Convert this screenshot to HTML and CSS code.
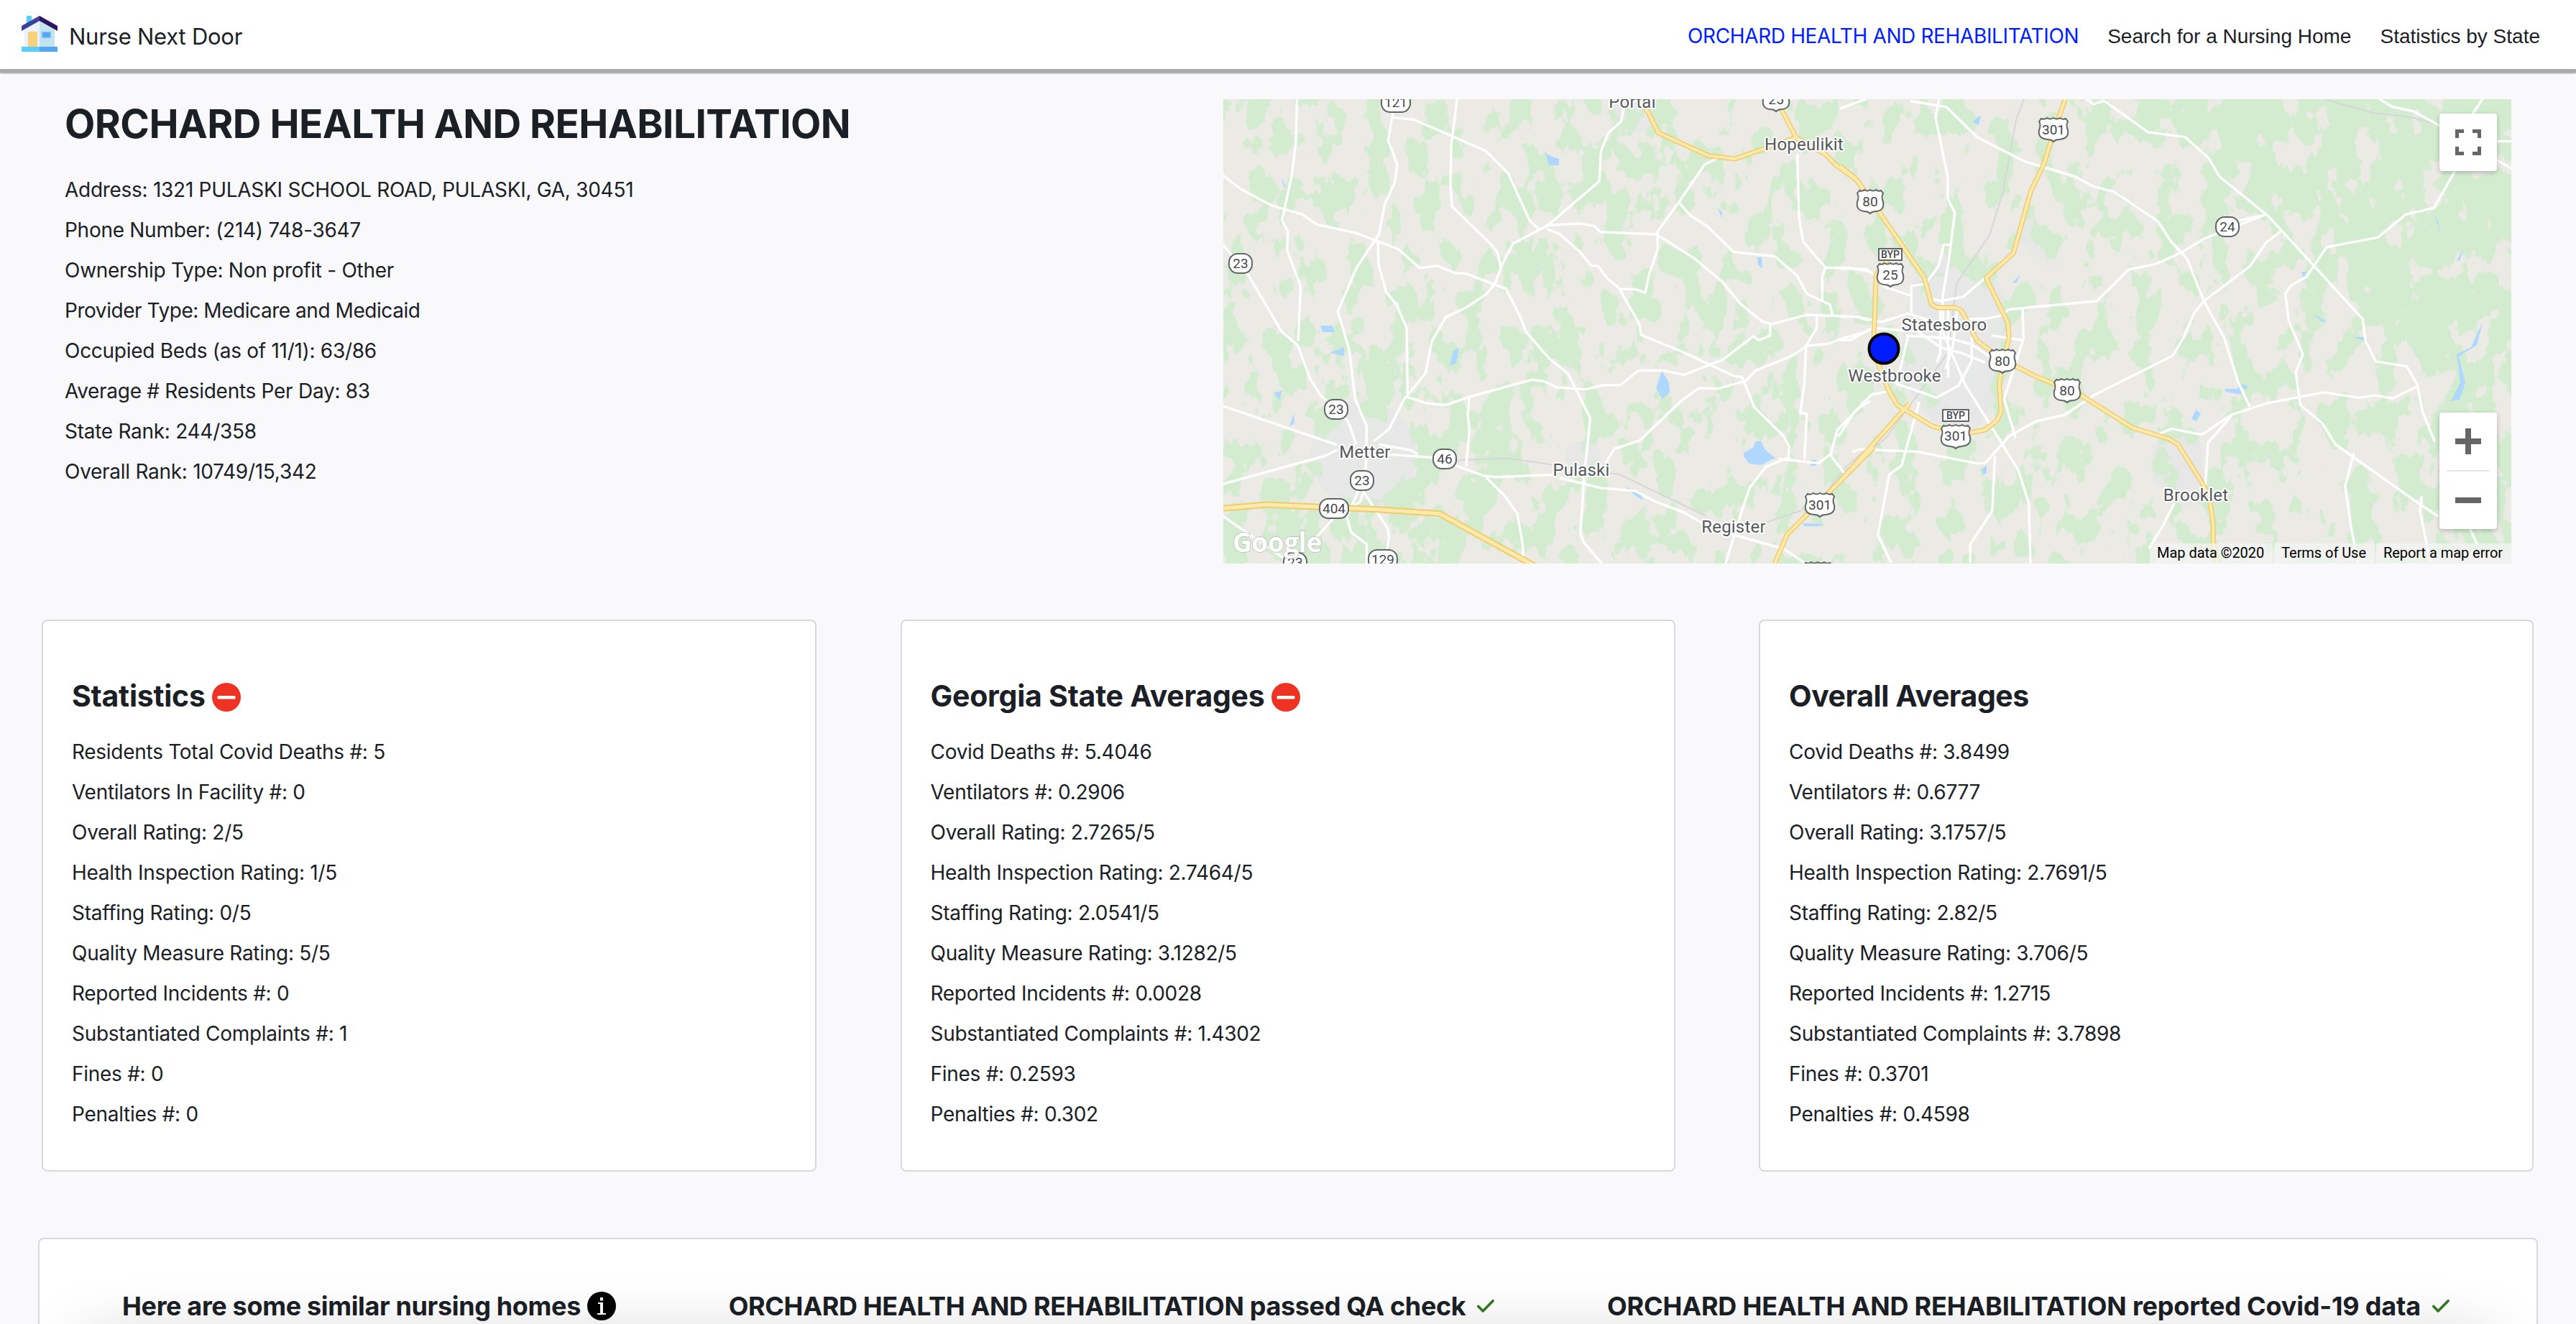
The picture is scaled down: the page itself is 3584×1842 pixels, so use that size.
FILE: index.html
```html
<!DOCTYPE html>
<html lang="en">
<head>
<meta charset="utf-8">
<title>Nurse Next Door</title>
<link rel="stylesheet" href="styles.css">
</head>
<body>
<header class="topbar">
  <a class="brand">
    <svg class="brand-icon" viewBox="0 0 50 50">
      <path fill="#e8f3fd" d="M4 16 25 5v39H4z"/><path fill="#c3e3ef" d="M25 5l21 11v28H25z"/>
      <path fill="#5bcdfa" d="M7 0h7v12H7z"/><path fill="#f9d07a" d="M9 22h13v21H9z"/>
      <path fill="#7fc0f8" d="M28 22h13v9H28z"/><path fill="#55a6f2" d="M29.500 23.500h10v6h-10z"/>
      <path fill="#3a429b" d="M25 0v7L0 21v-7z"/><path fill="#2e1560" d="M25 0v7l25 14v-7z"/>
      <path fill="#5bcdfa" d="M0 43h25v7H0z"/><path fill="#55a6f2" d="M25 43h25v7H25z"/>
    </svg>
    <span class="brand-name">Nurse Next Door</span>
  </a>
  <nav class="nav">
    <a class="nav-link active">ORCHARD HEALTH AND REHABILITATION</a>
    <a class="nav-link">Search for a Nursing Home</a>
    <a class="nav-link">Statistics by State</a>
  </nav>
</header>

<section class="overview">
  <div class="facts">
    <h1>ORCHARD HEALTH AND REHABILITATION</h1>
    <p>Address: 1321 PULASKI SCHOOL ROAD, PULASKI, GA, 30451</p>
    <p>Phone Number: (214) 748-3647</p>
    <p>Ownership Type: Non profit - Other</p>
    <p class="snug">Provider Type: Medicare and Medicaid</p>
    <p>Occupied Beds (as of 11/1): 63/86</p>
    <p>Average # Residents Per Day: 83</p>
    <p>State Rank: 244/358</p>
    <p>Overall Rank: 10749/15,342</p>
  </div>
  <div class="map">
    <svg class="map-canvas" viewBox="0 0 1792 646">
      <defs>
        <filter id="woods" x="0" y="0" width="1792" height="646" filterUnits="userSpaceOnUse" color-interpolation-filters="sRGB">
          <feTurbulence type="fractalNoise" baseFrequency="0.030 0.019" numOctaves="4" seed="11" result="n"/>
          <feComposite in="n" in2="SourceAlpha" operator="arithmetic" k2="1" k3="1" result="s"/>
          <feColorMatrix in="s" values="0 0 0 0 .827  0 0 0 0 .925  0 0 0 0 .816  0 0 0 26 -14.500"/>
        </filter>
        <filter id="soft"><feGaussianBlur stdDeviation="28"/></filter>
        <path id="us2" d="M-15-15q4 2 7-1 4 3 8 0 4 3 8 0 3 3 7 1l3 4q-3 5 0 12 2 12-10 13-5 0-8 3-3-3-8-3-12-1-10-13 3-7 0-12z"/>
        <path id="us3" d="M-17-15q4 2 8-1 4 3 9 0 5 3 9 0 4 3 8 1l3 4q-3 5 0 12 2 12-12 13-5 0-8 3-3-3-8-3-14-1-12-13 3-7 0-12z"/>
      </defs>
      <path fill="#ebeae5" d="M0 0h1792v646H0z"/>
      <g class="urban">
        <ellipse cx="195" cy="495" rx="73" ry="75"/><circle cx="572" cy="14" r="33"/><ellipse cx="500" cy="496" rx="24" ry="20"/>
        <path d="M970 232l55-12 50 25 18 60 10 70-25 30-30 55-60-10-50-65 10-75 5-40z"/>
        <path d="M1293 480l30-20 35 10 6 50 25 5-8 38-45 2-43-35z"/>
      </g>
      <g filter="url(#woods)">
        <path fill="#000" fill-opacity=".02" d="M0 0h1792v646H0z"/>
        <g filter="url(#soft)" fill="#000">
          <path fill-opacity=".16" d="M1240-60h640v350h-330l-80-110-160-90z"/>
          <path fill-opacity=".1" d="M1600 240h250v320h-170z"/>
          <path fill-opacity=".13" d="M260 410h160v120H260z"/>
          <path fill-opacity=".13" d="M165 330h80v110h-80zM0 560h320v90H0z"/>
          <path fill-opacity=".13" d="M20-20h140v60H20zM540 60h80v120h-80z"/>
          <path fill-opacity=".08" d="M400 80h60v280h-60z"/>
        </g>
      </g>
      <g class="urban" opacity=".85"><path d="M985 250l35-10 45 25 22 45-12 70-20 40-30 20-40-35-30-60 5-50z"/><path d="M1098 180l32-20-8 30 42 52-10 0-45-45z"/><ellipse cx="195" cy="500" rx="60" ry="58"/></g>
      <g class="water">
        <path d="M448 75l12 6 7 2v9h-14zM135 315h17l3 9h-17zM148 353l20-8v12zM320 350l8-4-4 22-9 3zM602 402l8-24 10 16 1 14-10 9zM724 492l14-8 2-8h8l6 12 14 11-20 10-16-2-8-10zM71 409l11-4-4 14zM92 455l6-18 1 14zM818 502h7v8h-8zM806 590l30 1-8 3h-20zM80 108l6 12-1 4zM743 220h6l1 16-6-6zM560 540l20 6 4 12-10-6zM688 151l6 6-1 8z"/>
        <path d="M1393 403h18l2-7 12 2-1 6-7-3-1 10-22-4zM1347 445l6-13 7 5-6 11zM1573 331l15 0 6 8zM1716 355l20-10 16-35-8 32-25 16 9 36-8 24-12 2 13-26zM1685 160l5 10 3 17zM1515 298l20 12-6 0zM1042 31l12-9-3 14zM1098 255l11-11-6 12zM1055 515l7-6 0 12h-6zM1500 240h7l-4 10zM1716 225l8-16-3 14z"/>
      </g>
      <g class="rail" transform="matrix(.574 0 0 .4209 -2 -8)"><path d="M570 1212l125-6 110 22 160 32 210 138M1320 1418l85-40 60-60 45-80 60-72"/></g>
      <g class="rail" transform="matrix(.6122 0 0 .4209 858 -8)"><path d="M418 18l-18 70-30 240-30 140-75 160-20 230-140 280-110 130M1100 18l110 46 90 15 62 26"/></g>
      <g class="road" transform="matrix(.574 0 0 .4209 -2 -8)">
        <path d="M182 18l-2 130-10 120-24 150 14 40-2 60 33 120-6 180"/>
        <path d="M0 268l48 50 72 52 75 30 36 34 92 26 104 54 52 62 44-6 42 24 28 2 96 50 34 92 14 50 58 90 44 48 20 54 34 94-14 180-10 200 8 30 44 70 6 76"/>
        <path d="M415 60l-12 95 22 80-6 60-24 70-14 100-54 110-46 145 28 130 14 160 28 90-2 140-20 80-26 80 10 50 38 40 0 80M415 80l50 6 175 104 54 74 52 156 24 30M570 18l-14 150-2 140 4 66 94 124 16 28 8 50"/>
        <path d="M1005 18l-30 30-8 46-30 36-18 60-4 100-125 146-84 60-26 66-18 66-20 34-50 46-48 30-35 80-15 106-52 86-36 98-38 42"/>
        <path d="M378 490l2 76 18 90 26 44 24 76 2 228 46 20 46 6 60-28 150-56 30 6 30 20 70 6 42-14h42l44-48h60l50 14 95-50 20-22 54-56 12 14 28-16v-38M600 1002l-4 60 4 50-8 120"/>
        <path d="M0 495l66 110 78 180 40 48 30 110 26 56 40 46 26 40 20 76M0 1032l280 130M0 1292l250-94 30-20M380 1160l80 20 15 14M375 1190l140 14 120 60 30 4 140-8M640 1268l44 60 32 60 14 110v60"/>
        <path d="M785 436l82-6 36 8 14 20 137 8 90 78 70 80 42 70 54 60 24 8 84-30 120 6 30 12M788 448l30 16 50 60 28 46h16l22 42 28 30 50 120 4 36 100 56 125 80 20 4 30 100 70 94 14 36-2 36-54 30-40 70-22 90-36 160"/>
        <path d="M1200 215l-30 20-62 124-52 98v60l-20 80-10 62-24-12h-40M1108 360l28 44 40 34 64 86 100 14 54 64 24 60 56 36 6 34M1395 200l4 210 10 80 54 86h60l50 14M1463 576l-8 30v80M1442 735v40l-26 60-4 120-10 100 16 4-6 150M1350 1208l96 14 30-30 16-80 50-70 30-26"/>
        <path d="M930 1220l22-46 60-26 100-130 44-44 44 2 70-26 24-34 90-50 34-32 50-6 36-18 60-24M818 1270l100 34 84 10 50 36 70 36 60 50 180 70 60 54M0 1395l170 160M345 1310l-10 40-60 48-60 90M345 1320l58 120 2 30-10 80M1472 1190l36 64"/>
      </g>
      <g class="road" transform="matrix(.6122 0 0 .4209 858 -8)">
        <path d="M0 50l60-32M160 25l82 20 70 100 108 80 115 50 40 32 48 18 100 98 28 64 38 60 38 140 46 120 32 148 26 80"/>
        <path d="M225 18l-8 60 28 200v70l16 46-14 160-14 120 2 120 50 170 120 280 24 110 4 200M250 500h-14l-12 70-30 60-32 6v90M560 18l16 18 24-12 100 104 84 16 54 70 24 60 110 130 36 56 180 286 6 70 24 70 70 16 24 60 12 90 28 100"/>
        <path d="M968 400l-140 80-50 44-60 40-62 18-72 104-200 28-22 22-30 8-50 2M968 400l-90 30M1005 452l-36 40-38 80-104 114-22 40-24 80-24 60-178 130-68 66-66 22-60 48-54 88-16 4-140-40-130-8-18 10"/>
        <path d="M1460 18l-22 50M1400 250l-50 128-64 22-64 76-116 32-46 98-36 30-12 26 8 90 32 110-16 60 10 108 50 60 30 70 184 190 50 48M1225 18l30 26 50 16 57 46M1493 158h40M1493 220l35 30M1312 968l-56 40-40-10-36 8-80-18-130 36-80 38-68 66-68-20-40 24M890 1065l-54 90-6 150M1168 1188l-20 110 14 140 16 116M1322 1330l-4 50 24 170M760 1354l-28 80-30 70M1432 1440l16 50"/>
        <path d="M0 580h60l20 22 20 36 60 30M0 738h40l54 18 60-28 60 26M0 815h24l50-40 80 10 80-4M210 680l20 6 50-14 50-62M228 700v160l-8 30M246 700v240M268 700l-12 140-16 70M150 800l100 10 50 20 40 40M160 770l70 70 50 20 50 30M415 710l2 100-44 200 26 130M345 800l70 16M155 800l-26 160 60 30 30 16 50-40 30-80v-80M112 985l-40 10-40 60-36 80M180 1020l-40 210-28 30-26 200 30 90M352 1200l-6 180-50 110v60"/>
      </g>
      <g class="hwy" transform="matrix(.574 0 0 .4209 -2 -8)">
        <path class="wide" d="M-10 1373l118-14 270 16 150 14 200 150 40 30"/>
        <path d="M1010 18l24 46 24 66 122 76 64 10 152-72M1350 36l42 110 70 54 26 36 50 50 30 56"/>
        <path d="M1580 1170l-210 288-30 96"/>
      </g>
      <g class="hwy" transform="matrix(.6122 0 0 .4209 858 -8)">
        <path d="M0 240l38 44 50 106 104 220 16 88 14 10h42l12 10 36 100 60 64 74 54 100 60 120 110 82 36 20 18 56 130 16 50 8 80 0 70 12 76"/>
        <path d="M512 18l-26 110-24 110-28 84-40 206-62 82 50 150 2 46-16 100-6 50 4 96-10 30-26 30-50 14-70-26-80-70-20-50-34-130 6-250 32-60M158 1025l-160 260"/>
      </g>
      <g class="hwy-core" transform="matrix(.574 0 0 .4209 -2 -8)">
        <path class="wide" d="M-10 1373l118-14 270 16 150 14 200 150 40 30"/>
        <path d="M1010 18l24 46 24 66 122 76 64 10 152-72M1350 36l42 110 70 54 26 36 50 50 30 56"/>
        <path d="M1580 1170l-210 288-30 96"/>
      </g>
      <g class="hwy-core" transform="matrix(.6122 0 0 .4209 858 -8)">
        <path d="M0 240l38 44 50 106 104 220 16 88 14 10h42l12 10 36 100 60 64 74 54 100 60 120 110 82 36 20 18 56 130 16 50 8 80 0 70 12 76"/>
        <path d="M512 18l-26 110-24 110-28 84-40 206-62 82 50 150 2 46-16 100-6 50 4 96-10 30-26 30-50 14-70-26-80-70-20-50-34-130 6-250 32-60M158 1025l-160 260"/>
      </g>
      <g class="sign">
        <rect x="220" y="-9" width="40" height="27" rx="12"/><rect x="8" y="215" width="32" height="27" rx="12"/>
        <rect x="141" y="418" width="32" height="27" rx="12"/><rect x="292" y="487" width="32" height="27" rx="12"/>
        <rect x="177" y="517" width="32" height="27" rx="12"/><rect x="134" y="556" width="40" height="27" rx="12"/>
        <rect x="202" y="627" width="40" height="27" rx="12"/><rect x="84" y="631" width="32" height="27" rx="12"/>
        <rect x="1381" y="164" width="32" height="27" rx="12"/>
        <rect x="912" y="208" width="32" height="16"/><rect x="1001" y="432" width="36" height="16"/>
        <use href="#us2" x="769"/><use href="#us3" x="830" y="564"/><use href="#us3" x="827" y="660"/>
        <use href="#us3" x="1155" y="42"/><use href="#us2" x="900" y="142"/><use href="#us2" x="928" y="244"/>
        <use href="#us2" x="1084" y="364"/><use href="#us2" x="1174" y="405"/><use href="#us3" x="1019" y="469"/>
      </g>
      <g class="sign-text">
        <text x="240" y="11">121</text><text x="24" y="235">23</text><text x="157" y="438">23</text><text x="308" y="507">46</text>
        <text x="193" y="537">23</text><text x="154" y="576">404</text><text x="222" y="647">129</text><text x="100" y="651">23</text>
        <text x="769" y="7">25</text><text x="830" y="571">301</text><text x="1155" y="49">301</text><text x="900" y="149">80</text>
        <text x="928" y="251">25</text><text x="1084" y="371">80</text><text x="1174" y="412">80</text><text x="1019" y="475">301</text>
        <text x="1397" y="184">24</text><text class="byp" x="928" y="221">BYP</text><text class="byp" x="1019" y="445">BYP</text>
      </g>
      <g class="town">
        <text x="569" y="12">Portal</text><text x="808" y="71">Hopeulikit</text><text x="197" y="499">Metter</text>
        <text x="498" y="524">Pulaski</text><text x="710" y="603">Register</text><text x="1003" y="322">Statesboro</text>
        <text x="934" y="393">Westbrooke</text><text x="1353" y="559">Brooklet</text>
      </g>
      <circle cx="919" cy="347" r="20.500" fill="#001cff" stroke="#000" stroke-width="4"/>
      <text class="logo" x="13" y="630" textLength="124">Google</text>
    </svg>
    <button class="map-btn full"><svg viewBox="0 0 36 36"><path fill="#666" d="M0 0h12v5H5v7H0zM24 0h12v12h-5V5h-7zM0 24h5v7h7v5H0zM31 24h5v12H24v-5h7z"/></svg></button>
    <div class="map-btn zoom">
      <svg viewBox="0 0 36 36"><path fill="#666" d="M14 0h8v14h14v8H22v14h-8V22H0v-8h14z"/></svg>
      <i class="zoom-line"></i>
      <svg viewBox="0 0 36 36"><path fill="#666" d="M0 14h36v8H0z"/></svg>
    </div>
    <div class="legal"><span>Map data ©2020</span><span>Terms of Use</span><span>Report a map error</span></div>
  </div>
</section>

<section class="cards">
  <article class="card">
    <h2>Statistics <svg class="minus" viewBox="0 0 40 40"><circle cx="20" cy="20" r="20" fill="#ee3224"/><rect x="7.500" y="18" width="25" height="4.500" rx="1.500" fill="#fff"/></svg></h2>
    <p>Residents Total Covid Deaths #: 5</p>
    <p>Ventilators In Facility #: 0</p>
    <p>Overall Rating: 2/5</p>
    <p>Health Inspection Rating: 1/5</p>
    <p>Staffing Rating: 0/5</p>
    <p>Quality Measure Rating: 5/5</p>
    <p>Reported Incidents #: 0</p>
    <p>Substantiated Complaints #: 1</p>
    <p>Fines #: 0</p>
    <p>Penalties #: 0</p>
  </article>
  <article class="card">
    <h2>Georgia State Averages <svg class="minus" viewBox="0 0 40 40"><circle cx="20" cy="20" r="20" fill="#ee3224"/><rect x="7.500" y="18" width="25" height="4.500" rx="1.500" fill="#fff"/></svg></h2>
    <p>Covid Deaths #: 5.4046</p>
    <p>Ventilators #: 0.2906</p>
    <p>Overall Rating: 2.7265/5</p>
    <p>Health Inspection Rating: 2.7464/5</p>
    <p>Staffing Rating: 2.0541/5</p>
    <p>Quality Measure Rating: 3.1282/5</p>
    <p>Reported Incidents #: 0.0028</p>
    <p>Substantiated Complaints #: 1.4302</p>
    <p>Fines #: 0.2593</p>
    <p>Penalties #: 0.302</p>
  </article>
  <article class="card">
    <h2 class="plain">Overall Averages</h2>
    <p>Covid Deaths #: 3.8499</p>
    <p>Ventilators #: 0.6777</p>
    <p>Overall Rating: 3.1757/5</p>
    <p>Health Inspection Rating: 2.7691/5</p>
    <p>Staffing Rating: 2.82/5</p>
    <p>Quality Measure Rating: 3.706/5</p>
    <p>Reported Incidents #: 1.2715</p>
    <p>Substantiated Complaints #: 3.7898</p>
    <p>Fines #: 0.3701</p>
    <p>Penalties #: 0.4598</p>
  </article>
</section>

<section class="similar">
  <h3>Here are some similar nursing homes <svg class="info" viewBox="0 0 40 40"><circle cx="20" cy="20" r="20"/><path fill="#fff" d="M18 8h4v4.500h-4zM15 15h7v15h4v2H14v-2h4V17h-3z"/></svg></h3>
  <h3>ORCHARD HEALTH AND REHABILITATION passed QA check <svg class="check" viewBox="0 0 24 18"><path d="M1.800 9.500l6.400 6.400L22.200 1.800"/></svg></h3>
  <h3 class="covid">ORCHARD HEALTH AND REHABILITATION reported Covid-19 data <svg class="check" viewBox="0 0 24 18"><path d="M1.800 9.500l6.400 6.400L22.200 1.800"/></svg></h3>
</section>
</body>
</html>
```
FILE: styles.css
```css
* { box-sizing: border-box; }
body {
  margin: 0;
  height: 1842px;
  overflow: hidden;
  background: #f9f9fb;
  color: #1b2026;
  font-family: Inter, "Liberation Sans", sans-serif;
  font-size: 28px;
  letter-spacing: -0.28px;
}
h1, h2, h3, p { margin: 0; white-space: nowrap; }
p { line-height: 56px; }
.snug { letter-spacing: -0.45px; }

.topbar {
  height: 101px;
  padding: 0 50px 0 30px;
  display: flex;
  justify-content: space-between;
  align-items: center;
  background: #fff;
  border-bottom: 5px solid #a9a9a9;
  box-shadow: 0 1px 2px #999;
}
.brand { display: flex; align-items: center; gap: 16px; }
.brand-icon { width: 50px; height: 50px; margin-top: -2px; }
.brand-name { font-size: 31px; letter-spacing: -0.25px; margin-top: 5px; }
.nav { display: flex; align-items: baseline; gap: 40px; font-family: "Liberation Sans", Arial, sans-serif; letter-spacing: 0; margin-top: 4px; }
.nav-link.active { color: #001cff; font-family: Inter, sans-serif; letter-spacing: -0.37px; }

.overview { display: flex; justify-content: space-between; padding: 37px 90px 0; height: 761px; }
.facts { padding-top: 2px; }
h1 { font-size: 55px; line-height: 64px; margin-bottom: 32px; font-weight: 700; letter-spacing: -0.6px; }

.map { position: relative; width: 1792px; height: 646px; overflow: hidden; }
.map-canvas { display: block; width: 1792px; height: 646px; }
.map-canvas path { vector-effect: non-scaling-stroke; }
.urban { fill: #e7e7e8; }
.water { fill: #b0d8ff; }
.rail { fill: none; stroke: #d5d7d8; stroke-width: 2; }
.road { fill: none; stroke: #fff; stroke-width: 3.4; stroke-linejoin: round; }
.hwy { fill: none; stroke: #f0cb6e; stroke-width: 7; stroke-linejoin: round; }
.hwy-core { fill: none; stroke: #ffeaac; stroke-width: 4; stroke-linejoin: round; }
.hwy .wide { stroke-width: 9; }
.hwy-core .wide { stroke-width: 5; }
.sign { fill: #fff; stroke: #626569; stroke-width: 2; }
.sign-text { font: 19px Roboto, sans-serif; fill: #45484c; text-anchor: middle; letter-spacing: 0; }
.sign-text .byp { font-size: 14px; font-weight: 500; }
.town {
  font: 24px Roboto, sans-serif;
  letter-spacing: 0.2px;
  fill: #55585c;
  text-anchor: middle;
  stroke: #fff;
  stroke-width: 4;
  stroke-linejoin: round;
  paint-order: stroke;
}
.logo {
  font: 700 37px "Open Sans", sans-serif;
  fill: #fff;
  stroke: #b5b9b5;
  stroke-width: 1.5;
  paint-order: stroke;
}
.map-btn {
  position: absolute;
  right: 20px;
  width: 80px;
  border: 0;
  padding: 22px 0;
  border-radius: 4px;
  background: #fff;
  box-shadow: 0 2px 6px rgba(0, 0, 0, .25);
  display: flex;
  flex-direction: column;
  align-items: center;
  justify-content: space-between;
}
.map-btn svg { width: 36px; height: 36px; display: block; }
.full { top: 20px; height: 80px; }
.zoom { top: 436px; height: 162px; }
.zoom-line { width: 60px; height: 2px; background: #e6e6e6; }
.legal { position: absolute; right: 0; bottom: 0; display: flex; gap: 2px; }
.legal span {
  height: 28px;
  line-height: 27px;
  padding: 0 12px 0 10px;
  background: rgba(245, 245, 245, .7);
  color: #000;
  font-family: Roboto, sans-serif;
  font-size: 20px;
  letter-spacing: -0.05px;
}

.cards { display: grid; grid-template-columns: repeat(3, 1078px); justify-content: space-between; padding: 0 59px 0 58px; }
.card {
  height: 768px;
  padding: 80px 39px 0 40px;
  background: #fff;
  border: 2px solid #d8d8da;
  border-radius: 8px;
}
h2 { font-size: 41px; line-height: 48px; margin-bottom: 26px; font-weight: 700; letter-spacing: -0.25px; display: flex; align-items: center; gap: 9px; }
h2.plain { letter-spacing: -0.45px; }
.minus { width: 40px; height: 40px; margin-top: 4px; }

.similar {
  position: relative;
  margin: 92px 53px 0;
  height: 200px;
  padding: 71px 121px 0 115px;
  display: flex;
  justify-content: space-between;
  align-items: flex-start;
  background: #fff;
  border: 2px solid #d8d8da;
  border-radius: 8px;
}
.similar::after {
  content: "";
  position: absolute;
  left: 60px;
  right: 60px;
  top: 140px;
  height: 70px;
  box-shadow: 0 0 90px rgba(0, 0, 0, .2);
  pointer-events: none;
}
h3 { font-size: 36px; line-height: 44px; font-weight: 700; letter-spacing: -0.35px; display: flex; align-items: center; gap: 9px; }
h3.covid { letter-spacing: -0.18px; }
.info { width: 40px; height: 40px; }
.check { width: 24px; height: 18px; margin-left: 7px; }
.check path { fill: none; stroke: #33791f; stroke-width: 3.6; stroke-linecap: round; stroke-linejoin: round; }
```
